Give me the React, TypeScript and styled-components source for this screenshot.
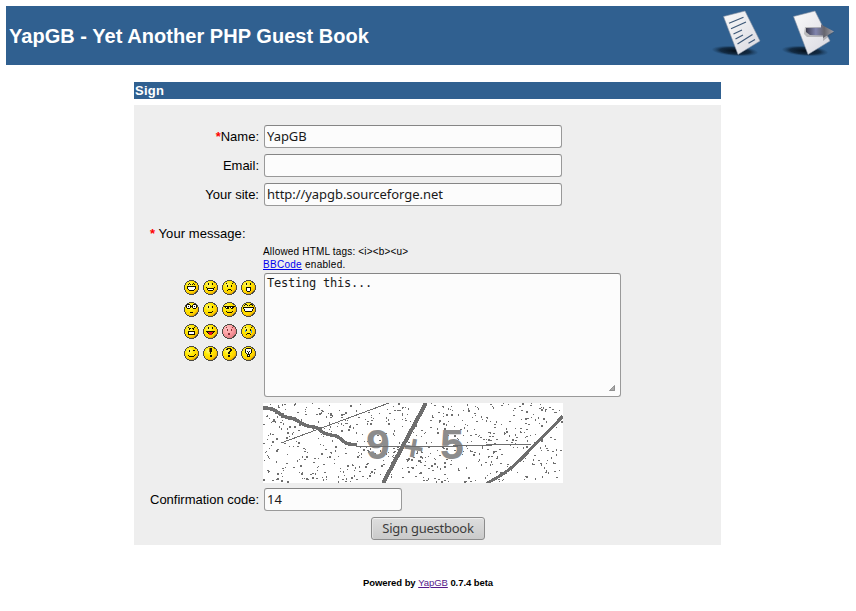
import React from 'react';
import styled, { createGlobalStyle } from 'styled-components';

const GlobalStyle = createGlobalStyle`
    body {
        margin: 0;
        padding: 6px 7px 0 6px;
        background-color: #fff;
        color: #000;
        font-family: 'Liberation Sans', Arial, sans-serif;
        font-size: 13px;
    }

    *, *::before, *::after {
        box-sizing: border-box;
    }
`;

const Banner = styled.header`
    display: flex;
    align-items: center;
    justify-content: space-between;
    height: 59px;
    padding: 0 15px 0 3px;
    background-color: #306090;
`;

const BannerTitle = styled.h1`
    margin: 0;
    color: #fff;
    font-size: 20px;
    line-height: 24px;
    letter-spacing: 0.04px;
    white-space: nowrap;
`;

const BannerNav = styled.nav`
    display: flex;
    gap: 16px;
    margin-top: -5px;
`;

const BannerIcon = styled.svg`
    display: block;
    width: 54px;
    height: 50px;
`;

const Content = styled.main`
    width: 587px;
    margin: 17px 0 0 128px;
`;

const SectionTitle = styled.h2`
    height: 17px;
    margin: 0 0 6px;
    padding-left: 1px;
    background-color: #306090;
    color: #fff;
    font-size: 13px;
    line-height: 17px;
    letter-spacing: 0.25px;
`;

const SignForm = styled.form`
    height: 440px;
    padding: 20px 16px 0;
    background-color: #eee;
`;

const Row = styled.div<{ gap?: number }>`
    display: grid;
    grid-template-columns: 109px 1fr;
    column-gap: 5px;
    align-items: center;
    margin-bottom: ${p => p.gap ?? 6}px;
`;

const Label = styled.label`
    line-height: 15px;
    text-align: right;
    white-space: nowrap;
`;

const MessageLabel = styled.label`
    display: block;
    margin-top: 20px;
    line-height: 15px;
    letter-spacing: 0.06px;
`;

const Required = styled.b`
    color: #f00;
`;

const TextInput = styled.input<{ width?: number }>`
    display: block;
    width: ${p => p.width ?? 298}px;
    height: 23px;
    padding: 0 2px 2px;
    border: 1px solid #999;
    border-top-color: #858585;
    border-radius: 3px;
    outline: none;
    background-color: #fcfcfc;
    color: #1a1a1a;
    font-family: 'Noto Sans', 'Open Sans', sans-serif;
    font-size: 13px;
    letter-spacing: -0.05px;
`;

const Hints = styled.div`
    margin: 4px 0 2px 113px;
    font-size: 10px;
    line-height: 13px;
    letter-spacing: 0.18px;
`;

const BBCodeHint = styled.div`
    letter-spacing: 0.28px;
`;

const Link = styled.a<{ visited?: boolean }>`
    color: ${p => p.visited ? '#551a8b' : '#00e'};
    text-decoration: underline;
`;

const MessageRow = styled(Row)`
    align-items: start;
`;

const SmileyGrid = styled.div`
    display: grid;
    grid-template-columns: repeat(4, 15px);
    gap: 7px 4px;
    margin: 7px 0 0 34px;
`;

const SmileyIcon = styled.svg`
    display: block;
    width: 15px;
    height: 15px;
    cursor: pointer;
`;

const MessageBox = styled.div`
    position: relative;
    width: 357px;
    height: 124px;
`;

const MessageArea = styled.textarea`
    display: block;
    width: 100%;
    height: 100%;
    padding: 2px;
    border: 1px solid #999;
    border-top-color: #858585;
    border-radius: 3px;
    outline: none;
    resize: none;
    background-color: #fcfcfc;
    color: #1a1a1a;
    font-family: 'DejaVu Sans Mono', monospace;
    font-size: 12px;
    line-height: 14px;
    letter-spacing: -0.22px;
`;

const ResizeGrip = styled.svg`
    position: absolute;
    right: 6px;
    bottom: 6px;
    width: 6px;
    height: 6px;
`;

const Captcha = styled.svg`
    display: block;
    width: 300px;
    height: 80px;
    margin: 0 0 5px 113px;
    background-color: #fff;
`;

const SubmitButton = styled.button`
    display: block;
    width: 114px;
    height: 23px;
    margin: 0 0 0 221px;
    padding: 0 0 1px;
    border: 1px solid #8c8c8c;
    border-radius: 3px;
    background: linear-gradient(#dedede, #cacaca);
    box-shadow: inset 0 1px 0 #efefef, inset 1px 0 0 #e2e2e2;
    color: #3c3c3c;
    font-family: 'Noto Sans', 'Open Sans', sans-serif;
    font-size: 13px;
    line-height: 20px;
    letter-spacing: -0.25px;
    white-space: nowrap;
`;

const Footer = styled.footer`
    margin-top: 31px;
    padding-left: 1px;
    font-size: 9.5px;
    font-weight: bold;
    line-height: 13px;
    letter-spacing: -0.06px;
    text-align: center;

    a {
        font-weight: normal;
    }
`;

// Pixel rows start at y = 2 of the 15x15 icon, columns at x = 2
const PIXEL_COLORS: Record<string, string> = {
    k: '#141000',
    w: '#ffffff',
    r: '#e8141c',
    b: '#3d9be8',
    o: '#a07000',
    g: '#555555',
    m: '#8a3038',
};

interface Smiley {
    name: string;
    pixels: string[];
    pink?: boolean;
}

const SMILEYS: Smiley[] = [
    { name: 'grin', pixels: ['', '...k...k', '..k.k.k.k', '', '.kkkkkkkkk', '.kwwwwwwwk', '.kwwwwwwwk', '..kwwwwwk', '...kkkkk'] },
    { name: 'smile', pixels: ['', '...k...k', '...k...k', '', '', '.k.......k', '..kkkkkkk', '..kwwwwwk', '...kkkkk'] },
    { name: 'sad', pixels: ['', '..k.....k', '', '...k...k', '...k...k', '', '', '....kkk', '...k...k'] },
    { name: 'surprised', pixels: ['', '...k...k', '...k...k', '', '', '...kkkkk', '...kwwwk', '...kwwwk', '...kwwwk', '....kkk'] },
    { name: 'eek', pixels: ['.kkk...kkk', 'kwwwk.kwwwk', 'kwkwkkkwkwk', 'kwwwk.kwwwk', '.kkk...kkk', '', '', '', '....kkk'] },
    { name: 'confused', pixels: ['', '', '...k...k', '...k...k', '', '', '', '.......k', '...kkkk'] },
    { name: 'cool', pixels: ['', '', 'kkkkkkkkkkk', '.kwkk.kwkk', '..kkk..kk', '', '', '..k.....k', '...kkkkk'] },
    { name: 'laugh', pixels: ['..kk...kk', '.k..k.k..k', '', 'kkkkkkkkkkk', 'kwwwwwwwwwk', '.kwwwwwwwk', '.kwwwwwwwk', '..kkkkkkk'] },
    { name: 'mad', pixels: ['', '..k.....k', '...kk.kk', '...k...k', '', '..kkkkkkk', '..kwwwwwk', '..kwwwwwk', '..kkkkkkk'] },
    { name: 'razz', pixels: ['', '...k...k', '...k...k', '', '', '.kkkkkkkkk', '..krrrrrk', '...krrrk', '....rrr'] },
    { name: 'embarrassed', pink: true, pixels: ['', '..m.....m', '', '...m...m', '...m...m', '', '', '....mm', '....mm'] },
    { name: 'cry', pixels: ['', '..k.....k', '', '...k...k', '..bk...kb', '..b.....b', '........b', '....kkk', '...k...k'] },
    { name: 'wink', pixels: ['', '', '...k...kk', '...k', '', '', '.........k', '..k.....k', '...kkkkk'] },
    { name: 'exclaim', pixels: ['....okk', '....okk', '....okk', '....okk', '.....k', '.....k', '', '.....kk', '.....kk'] },
    { name: 'question', pixels: ['...kkkk', '..kk..kk', '......kk', '.....kk', '....kk', '....kk', '', '....kk', '....kk'] },
    { name: 'idea', pixels: ['...kkkkk', '..kwwwwwk', '..kwwwwwk', '..kwkwkwk', '..kwwkwwk', '...kwkwk', '....kkk', '....kwk', '....kkk'] },
];

// 15x15 disc with stepped edges
const DISC_EDGE = 'M5 0h5v1h2v1h1v1h1v2h1v5h-1v2h-1v1h-1v1h-2v1h-5v-1h-2v-1h-1v-1h-1v-2h-1v-5h1v-2h1v-1h1v-1h2z';

const SmileyFace: React.FC<{ smiley: Smiley }> = ({ smiley }) => {
    const cells: React.ReactElement[] = [];

    smiley.pixels.forEach((row, y) => {
        row.split('').forEach((c, x) => {
            if (PIXEL_COLORS[c]) {
                cells.push(<rect key={`${x}-${y}`} x={x + 2} y={y + 2} width="1" height="1" fill={PIXEL_COLORS[c]} />);
            }
        });
    });

    return (
        <SmileyIcon viewBox="0 0 15 15" role="img" aria-label={smiley.name} shapeRendering="crispEdges">
            <path d={DISC_EDGE} fill="#4c4a42" />
            <circle cx="7.5" cy="7.5" r="6.5" fill={smiley.pink ? 'url(#facePink)' : 'url(#faceYellow)'} />
            {cells}
        </SmileyIcon>
    );
};

const Gradients = () => (
    <>
        <radialGradient id="faceYellow" cx="0.35" cy="0.3" r="0.75">
            <stop offset="0" stopColor="#fff67a" />
            <stop offset="0.4" stopColor="#ffe900" />
            <stop offset="0.8" stopColor="#ffd000" />
            <stop offset="1" stopColor="#d89a00" />
        </radialGradient>
        <radialGradient id="facePink" cx="0.35" cy="0.3" r="0.75">
            <stop offset="0" stopColor="#ffc4c4" />
            <stop offset="0.6" stopColor="#fb9a9e" />
            <stop offset="1" stopColor="#e07a80" />
        </radialGradient>
        <linearGradient id="paper" x1="0" y1="0" x2="1" y2="1">
            <stop offset="0" stopColor="#fafafa" />
            <stop offset="1" stopColor="#d8d8e0" />
        </linearGradient>
        <linearGradient id="arrow" x1="0" y1="0" x2="1" y2="0">
            <stop offset="0" stopColor="#3e3e50" />
            <stop offset="0.35" stopColor="#8084ae" />
            <stop offset="0.65" stopColor="#66666e" />
            <stop offset="1" stopColor="#a2a2aa" />
        </linearGradient>
        <radialGradient id="shadow">
            <stop offset="0" stopColor="#06101a" stopOpacity="1" />
            <stop offset="0.65" stopColor="#0c1f32" stopOpacity="0.8" />
            <stop offset="1" stopColor="#1a3c5c" stopOpacity="0.1" />
        </radialGradient>
    </>
);

const HiddenDefs = styled.svg`
    position: absolute;
    width: 0;
    height: 0;
`;

const Paper = () => (
    <>
        <ellipse cx="25" cy="43" rx="23" ry="5" fill="url(#shadow)" transform="rotate(4 25 43)" />
        <path d="M13.5 8.5L35 3L50 33L28 46.5Z" fill="url(#paper)" stroke="#8a94a4" strokeWidth="0.6" />
    </>
);

const ReadIcon = () => (
    <BannerIcon viewBox="0 0 54 50" role="img" aria-label="Read">
        <Paper />
        <path
            d="M19 15.3L33.5 9.2M21 20.8L36 14M23.5 26L32 22M25.5 31L33 27M27.5 36L42.5 26.5M38.5 35.2L45 31.5"
            stroke="#3d5878"
            strokeWidth="1.2"
            fill="none"
        />
    </BannerIcon>
);

const SignIcon = () => (
    <BannerIcon viewBox="0 0 54 50" role="img" aria-label="Sign">
        <Paper />
        <path d="M25 19h16v-3l13 8.500l-11 8.5v-4h-16l-3-3z" fill="#444" opacity="0.3" />
        <path d="M26 20L41 19.8V16.5L54 23.5L43 30V27.5L30 27L26 24Z" fill="url(#arrow)" />
    </BannerIcon>
);

interface Speck {
    x: number;
    y: number;
    w: number;
    h: number;
}

// Fixed seed keeps the noise stable between renders
const createSpecks = (count: number): Speck[] => {
    let seed = 4711;
    const next = (max: number) => {
        seed = (seed * 1103515 + 12345) % 2147483648;
        return Math.floor((seed / 2147483648) * max);
    };

    return Array.from({ length: count }, () => ({
        x: next(299),
        y: next(79),
        w: next(5) < 2 ? 2 : 1,
        h: next(3) === 0 ? 2 : 1,
    }));
};

const SPECKS = createSpecks(680);

const CaptchaImage = () => (
    <Captcha viewBox="0 0 300 80" role="img" aria-label="Confirmation code">
        <g shapeRendering="crispEdges" fill="#6e6e6e">
            {SPECKS.map((s, index) => (
                <rect key={index} x={s.x} y={s.y} width={s.w} height={s.h} />
            ))}
        </g>
        <g fill="#8c8c8c" fontFamily="'Liberation Sans', Arial, sans-serif" fontWeight="bold" fontSize="43">
            <text x="103" y="55.5">9</text>
            <text x="140" y="57" fontSize="36" transform="rotate(10 151 44)">+</text>
            <text x="177" y="55.5">5</text>
        </g>
        <g fill="none" stroke="#6e6e6e" shapeRendering="crispEdges">
            <path
                d="M0 5C5 5 9 5 13 8S20 14 25 14.5S34 17 38 20S46 23.5 51 24S57 28 61 30S69 32 73 33S79 38 83 40S90 41 94 42"
                strokeWidth="3.5"
            />
            <path d="M18 40L126 0" strokeWidth="1" />
            <path d="M94 43.5H195M190 42.5H229M223 41.5H268" strokeWidth="1" />
            <path d="M120 80L163 0" strokeWidth="4" />
            <path d="M223 80.5Q243 71 257 57T300 13" strokeWidth="3" />
        </g>
    </Captcha>
);

const App: React.FC = () => (
    <>
        <GlobalStyle />
        <HiddenDefs aria-hidden="true">
            <defs>
                <Gradients />
            </defs>
        </HiddenDefs>
        <Banner>
            <BannerTitle>YapGB - Yet Another PHP Guest Book</BannerTitle>
            <BannerNav>
                <ReadIcon />
                <SignIcon />
            </BannerNav>
        </Banner>
        <Content>
            <SectionTitle>Sign</SectionTitle>
            <SignForm onSubmit={e => e.preventDefault()}>
                <Row>
                    <Label htmlFor="name"><Required>*</Required>Name:</Label>
                    <TextInput id="name" defaultValue="YapGB" />
                </Row>
                <Row>
                    <Label htmlFor="email">Email:</Label>
                    <TextInput id="email" />
                </Row>
                <Row>
                    <Label htmlFor="site">Your site:</Label>
                    <TextInput id="site" defaultValue="http://yapgb.sourceforge.net" />
                </Row>
                <MessageLabel htmlFor="message"><Required>*</Required> Your message:</MessageLabel>
                <Hints>
                    <div>Allowed HTML tags: &lt;i&gt;&lt;b&gt;&lt;u&gt;</div>
                    <BBCodeHint><Link href="#">BBCode</Link> enabled.</BBCodeHint>
                </Hints>
                <MessageRow>
                    <SmileyGrid>
                        {SMILEYS.map(s => <SmileyFace key={s.name} smiley={s} />)}
                    </SmileyGrid>
                    <MessageBox>
                        <MessageArea id="message" spellCheck={false} defaultValue="Testing this..." />
                        <ResizeGrip viewBox="0 0 6 6">
                            <path d="M6 0V6H0Z" fill="#aaa" />
                            <path d="M5.5 0.5V5.5H0.5Z" fill="none" stroke="#888" strokeWidth="0.8" />
                        </ResizeGrip>
                    </MessageBox>
                </MessageRow>
                <CaptchaImage />
                <Row>
                    <Label htmlFor="code">Confirmation code:</Label>
                    <TextInput id="code" width={138} defaultValue="14" />
                </Row>
                <SubmitButton type="submit">Sign guestbook</SubmitButton>
            </SignForm>
        </Content>
        <Footer>
            Powered by <Link href="#" visited>YapGB</Link> 0.7.4 beta
        </Footer>
    </>
);

export default App;
